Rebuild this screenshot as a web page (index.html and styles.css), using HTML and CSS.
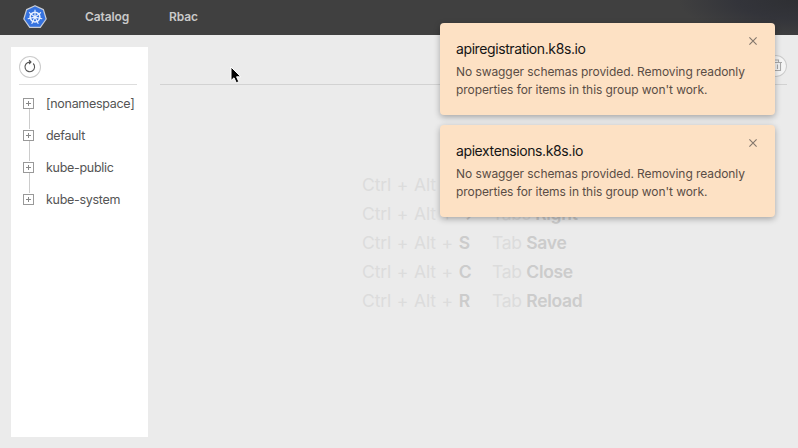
FILE: index.html
```html
<!DOCTYPE html>
<html lang="en">
<head>
<meta charset="utf-8">
<title>Catalog</title>
<link rel="stylesheet" href="styles.css">
</head>
<body>
<header class="topbar">
  <svg class="logo" viewBox="0 0 24 24">
    <path d="M12 .7 20.4 4.6 23.2 14 17.3 22.4H6.7L.8 14 3.6 4.6Z" fill="#3572df" stroke="#c9cdd6" stroke-width="1.2" stroke-linejoin="round"/>
    <g fill="none" stroke="#e8f0ff" stroke-linecap="round">
      <circle cx="12" cy="12.1" r="4.9" stroke-width="1.5"/>
      <path stroke-width="1.1" d="M12 12.1V5M12 12.1l5.6-4.4M12 12.1l6.9 1.6M12 12.1l3.1 6.4M12 12.1l-3.1 6.4M12 12.1l-6.9 1.6M12 12.1 6.4 7.7"/>
    </g>
    <circle cx="12" cy="12.1" r="1.5" fill="#e8f0ff"/>
  </svg>
  <nav class="nav"><a>Catalog</a><a>Rbac</a></nav>
</header>
<main class="layout">
  <aside class="sidebar">
    <div class="tools">
      <button class="round"><svg width="22" height="22" viewBox="0 0 22 22" fill="none" stroke="#555" stroke-width="1.1"><path d="M14.2 7.5a4.8 4.8 0 1 1-3.7-1.4h1.2M10.1 4.1l1.9 2-1.9 1.9"/></svg></button>
    </div>
    <ul class="tree">
      <li><i class="plus"></i><span>[nonamespace]</span></li>
      <li><i class="plus"></i><span>default</span></li>
      <li><i class="plus"></i><span>kube-public</span></li>
      <li><i class="plus"></i><span>kube-system</span></li>
    </ul>
  </aside>
  <section class="workspace">
    <div class="tools actions">
      <button class="round"><svg width="22" height="22" viewBox="0 0 22 22" fill="none" stroke="#aaa" stroke-width="1.1"><path d="M5 7.5h12M8.5 7V5h5v2M6.5 7.5v8h9v-8M9.5 9.5v4.5M12.5 9.5v4.5"/></svg></button>
    </div>
    <div class="shortcuts">
      <span>Ctrl + Alt + <b>←</b></span><span>Tabs <b>Left</b></span>
      <span>Ctrl + Alt + <b>→</b></span><span>Tabs <b>Right</b></span>
      <span>Ctrl + Alt + <b>S</b></span><span>Tab <b>Save</b></span>
      <span>Ctrl + Alt + <b>C</b></span><span>Tab <b>Close</b></span>
      <span>Ctrl + Alt + <b>R</b></span><span>Tab <b>Reload</b></span>
    </div>
  </section>
</main>
<div class="notices">
  <article class="notice">
    <h2>apiregistration.k8s.io</h2>
    <p>No swagger schemas provided. Removing readonly<br>properties for items in this group won't work.</p>
    <svg class="close" viewBox="0 0 8 8"><path d="M.4.4l7.2 7.2M7.6.4.4 7.6"/></svg>
  </article>
  <article class="notice">
    <h2>apiextensions.k8s.io</h2>
    <p>No swagger schemas provided. Removing readonly<br>properties for items in this group won't work.</p>
    <svg class="close" viewBox="0 0 8 8"><path d="M.4.4l7.2 7.2M7.6.4.4 7.6"/></svg>
  </article>
</div>
<svg class="cursor" viewBox="0 0 12 18"><path d="M1 1v13.6l3-2.8 2.3 5 2.5-1.1-2.2-4.9h4.3Z" fill="#000" stroke="#fff" stroke-width="1"/></svg>
</body>
</html>
```
FILE: styles.css
```css
* { box-sizing: border-box; }
body {
  margin: 0;
  height: 448px;
  overflow: hidden;
  display: flex;
  flex-direction: column;
  background: #ebebeb;
  font-family: Inter, "Liberation Sans", sans-serif;
  font-size: 12.5px;
  letter-spacing: -.3px;
  color: #555;
}
.topbar {
  height: 35px;
  flex: none;
  display: flex;
  align-items: center;
  padding-left: 23px;
  background: radial-gradient(ellipse 120px 38px at 100% 0, #2e2f33, #33343a 50%, transparent), #404040;
}
.logo { width: 24px; height: 24px; margin-top: -1px; }
.nav { display: flex; gap: 40px; margin-left: 38px; font-weight: 600; font-size: 12px; letter-spacing: -.12px; line-height: 20px; color: #c9c9c9; margin-top: -2px; }
.layout { flex: 1; display: flex; gap: 12px; padding: 12px 11px 11px; }
.sidebar { width: 137px; background: #fff; padding: 0 11px 0 8px; }
.tools { height: 38px; display: flex; padding-top: 9px; border-bottom: 1px solid #ddd; }
.round {
  width: 22px; height: 22px;
  padding: 0;
  border: 0;
  border-radius: 50%;
  background: #fff;
  box-shadow: inset 0 0 0 1px #ccc;
}
.round svg { display: block; }
.tree { list-style: none; margin: 2px 0 0; padding: 0; }
.tree li { height: 32px; display: flex; align-items: center; gap: 12px; padding-left: 4px; position: relative; white-space: nowrap; }
.tree li + li::before { content: ""; position: absolute; left: 10px; top: -10px; height: 20px; border-left: 1px solid #ccc; }
.plus {
  width: 11px; height: 11px;
  flex: none;
  border: 1px solid #999;
  background: linear-gradient(#888, #888) center / 5px 1px no-repeat, linear-gradient(#888, #888) center / 1px 5px no-repeat;
}
.workspace { flex: 1; }
.actions { justify-content: flex-end; padding-top: 8px; border-color: #d2d2d2; }
.actions .round { background: #f5f5f5; }
.shortcuts {
  display: grid;
  grid-template-columns: 108px auto;
  justify-content: start;
  column-gap: 22px;
  margin: 85px 0 0 202px;
  line-height: 29px;
  font-size: 17.5px;
  letter-spacing: -.3px;
  white-space: nowrap;
  color: #dcdcdc;
}
.shortcuts span:nth-child(odd) { letter-spacing: -.1px; word-spacing: .8px; }
.shortcuts b { color: #ccc; font-weight: 600; }
.notices { position: absolute; left: 440px; top: 23px; width: 335px; display: grid; gap: 10px; }
.notice {
  position: relative;
  height: 92px;
  padding: 16px;
  border-radius: 4px;
  background: #fde1c4;
  box-shadow: 0 2px 6px rgba(0, 0, 0, .3);
}
.notice h2 { margin: 0; font-size: 14px; line-height: 20px; font-weight: 400; color: #151515; letter-spacing: -.4px; }
.notice p { margin: 4px 0 0; font-size: 12px; line-height: 18px; color: #5a4d45; letter-spacing: -.07px; white-space: nowrap; }
.close { position: absolute; left: 309px; top: 14px; width: 8px; height: 8px; fill: none; stroke: #82766c; stroke-width: 1.1; }
.cursor { position: absolute; left: 230px; top: 66px; width: 12px; height: 18px; }
```
